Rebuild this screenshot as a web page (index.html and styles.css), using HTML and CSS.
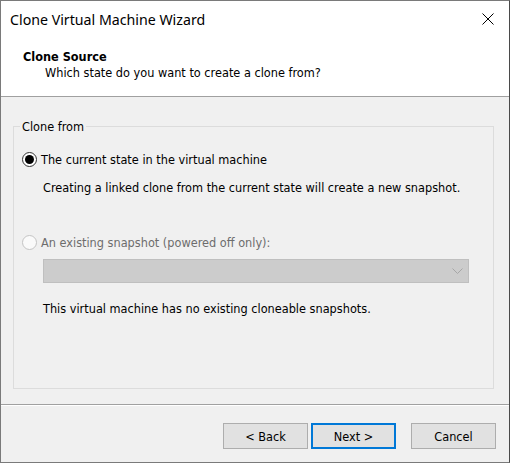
FILE: index.html
```html
<!DOCTYPE html>
<html>
<head>
<meta charset="utf-8">
<link rel="stylesheet" href="styles.css">
</head>
<body>
<div class="window">
  <div class="top">
    <div class="titlebar">
      <span class="title">Clone Virtual Machine Wizard</span>
      <svg class="close" width="12" height="12" viewBox="0 0 12 12"><path d="M0.5 0.5 L11.5 11.5 M11.5 0.5 L0.5 11.5" stroke="#000" stroke-width="1" fill="none"/></svg>
    </div>
    <div class="header">
      <div class="h-title">Clone Source</div>
      <div class="h-sub">Which state do you want to create a clone from?</div>
    </div>
  </div>
  <div class="content">
    <fieldset class="group">
      <legend>Clone from</legend>
      <div class="radio-row">
        <span class="radio checked"></span>
        <span class="label">The current state in the virtual machine</span>
      </div>
      <div class="desc first">Creating a linked clone from the current state will create a new snapshot.</div>
      <div class="radio-row second disabled">
        <span class="radio"></span>
        <span class="label">An existing snapshot (powered off only):</span>
      </div>
      <div class="combo">
        <svg class="chev" width="11" height="6" viewBox="0 0 11 6"><path d="M0.5 0.5 L5.5 5.5 L10.5 0.5" stroke="#a6a6a6" stroke-width="1" fill="none"/></svg>
      </div>
      <div class="desc last">This virtual machine has no existing cloneable snapshots.</div>
    </fieldset>
  </div>
  <div class="footer">
    <button class="btn back">&lt; Back</button>
    <button class="btn next">Next &gt;</button>
    <button class="btn cancel">Cancel</button>
  </div>
</div>
</body>
</html>
```
FILE: styles.css
```css
html, body {
  margin: 0;
  padding: 0;
  background: #f0f0f0;
}
.window {
  width: 510px;
  height: 463px;
  box-sizing: border-box;
  border: 1px solid #7a7a7a;
  border-right-color: #4a4a4a;
  background: #f0f0f0;
  display: flex;
  flex-direction: column;
  font-family: "DejaVu Sans Condensed", "DejaVu Sans", sans-serif;
  font-size: 12.6px;
  color: #000;
}
.top {
  background: #fff;
  height: 95px;
  border-bottom: 1px solid #a0a0a0;
  flex: none;
}
.titlebar {
  height: 34px;
  display: flex;
  align-items: center;
  justify-content: space-between;
  padding: 2px 15px 0 9px;
  box-sizing: border-box;
}
.title {
  font-family: "Noto Sans", sans-serif;
  font-size: 14.2px;
  color: #000;
}
.close {
  display: block;
  margin-top: -1px;
}
.header {
  padding: 14px 0 0 22px;
}
.h-title {
  font-weight: bold;
  line-height: 15px;
  color: #000;
}
.h-sub {
  margin: 1px 0 0 22px;
  line-height: 15px;
  color: #000;
}
.content {
  flex: none;
  height: 308px;
  padding: 22px 15px 0 12px;
  box-sizing: border-box;
  border-bottom: 1px solid #a0a0a0;
}
.group {
  margin: 0;
  height: 270px;
  box-sizing: border-box;
  border: 1px solid #dcdcdc;
  padding: 18px 8px 0 8px;
  min-width: 0;
}
.group legend {
  padding: 0 2px;
  margin-left: -2px;
  line-height: 15px;
  color: #000;
}
.radio-row {
  display: flex;
  align-items: center;
  height: 15px;
  line-height: 15px;
}
.radio {
  width: 15px;
  height: 15px;
  box-sizing: border-box;
  border-radius: 50%;
  border: 1px solid #333;
  background: #fff;
  display: flex;
  align-items: center;
  justify-content: center;
  flex: none;
}
.radio.checked::after {
  content: "";
  width: 9px;
  height: 9px;
  border-radius: 50%;
  background: #000;
}
.label {
  margin-left: 4px;
}
.disabled .radio {
  border-color: #c4c4c4;
  background: #fafafa;
}
.disabled .label {
  color: #6d6d6d;
}
.desc {
  margin-left: 21px;
  line-height: 15px;
}
.desc.first {
  margin-top: 13px;
}
.radio-row.second {
  margin-top: 40px;
}
.combo {
  margin: 9px 0 0 21px;
  width: 426px;
  height: 24px;
  box-sizing: border-box;
  background: #cccccc;
  border: 1px solid #bfbfbf;
  display: flex;
  align-items: center;
  justify-content: flex-end;
  padding-right: 5px;
}
.chev {
  display: block;
}
.desc.last {
  margin-top: 18px;
}
.footer {
  flex: 1;
  border-top: 1px solid #fff;
  display: flex;
  align-items: flex-start;
  justify-content: flex-end;
  padding: 17px 13px 0 0;
}
.btn {
  font-family: "DejaVu Sans Condensed", "DejaVu Sans", sans-serif;
  font-size: 12.6px;
  color: #000;
  width: 85px;
  height: 26px;
  box-sizing: border-box;
  background: #e1e1e1;
  border: 1px solid #adadad;
  padding: 0;
  margin: 0;
}
.btn.next {
  margin-left: 3px;
  border: 2px solid #0078d7;
}
.btn.cancel {
  margin-left: 15px;
}
```
